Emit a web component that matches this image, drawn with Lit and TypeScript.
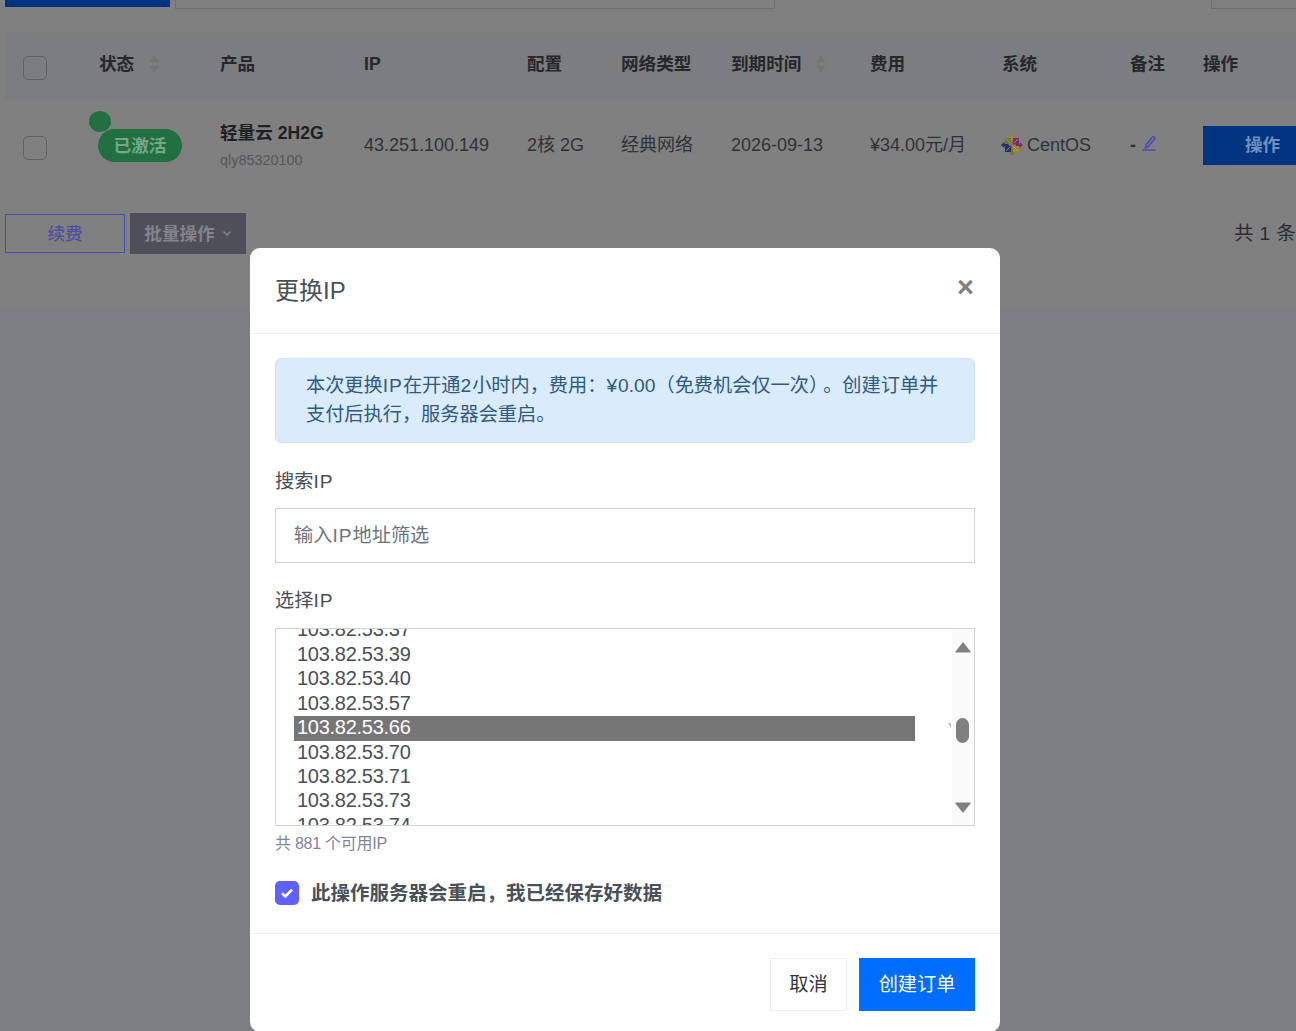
import { LitElement, html, css } from "lit";
import { customElement } from "lit/decorators.js";

const OPTIONS = [
  "103.82.53.37",
  "103.82.53.39",
  "103.82.53.40",
  "103.82.53.57",
  "103.82.53.66",
  "103.82.53.70",
  "103.82.53.71",
  "103.82.53.73",
  "103.82.53.74",
];

const sorter = html`<svg class="sort" width="10" height="17" viewBox="0 0 10 17">
  <path d="M5 0l5 6H0z" fill="#747474" />
  <path d="M0 10h10l-5 6z" fill="#747474" />
</svg>`;

const centos = html`<svg class="os" width="22" height="22" viewBox="0 0 22 22">
  <rect x="4" y="4" width="6.4" height="6.4" fill="#6d7a2e" />
  <rect x="11.6" y="4" width="6.4" height="6.4" fill="#7a2a6a" />
  <rect x="4" y="11.6" width="6.4" height="6.4" fill="#2c2c68" />
  <rect x="11.6" y="11.6" width="6.4" height="6.4" fill="#a8842a" />
  <path d="M5 5l4.4 4.4M17 5l-4.4 4.4M5 17l4.4-4.4M17 17l-4.4-4.4" stroke="#a0a0a0" stroke-width=".7" />
  <path d="M11 0l3 3.4h-2v4h-2v-4H8z" fill="#a8842a" />
  <path d="M22 11l-3.4 3v-2h-4v-2h4V8z" fill="#7a2a6a" />
  <path d="M11 22l-3-3.4h2v-4h2v4h2z" fill="#6d7a2e" />
  <path d="M0 11l3.4-3v2h4v2h-4v2z" fill="#2c2c68" />
</svg>`;

@customElement("app-root")
export class AppRoot extends LitElement {
  static styles = css`
    :host {
      display: block;
      position: relative;
      width: 1296px;
      height: 1031px;
      overflow: hidden;
      background: #7d7e81;
      font-family: "Liberation Sans", "Noto Sans CJK SC", sans-serif;
      line-height: 24px;
      text-spacing-trim: space-all;
      color: #2a2c30;
    }
    .page {
      height: 308px;
      background: #808080;
      padding-left: 5px;
      box-sizing: border-box;
      overflow: hidden;
    }
    .top {
      display: flex;
      height: 33px;
      width: 1400px;
      border-bottom: 1px solid #7b7b7b;
      box-sizing: border-box;
    }
    .top-blue {
      flex: none;
      width: 165px;
      height: 7px;
      background: #003380;
    }
    .top-field {
      flex: none;
      width: 600px;
      height: 9px;
      box-sizing: border-box;
      margin-left: 5px;
      border: 1px solid #6e6e6e;
      border-top: 0;
    }
    .top-right {
      flex: none;
      width: 100px;
      height: 9px;
      box-sizing: border-box;
      margin-left: 436px;
      border: 1px solid #6e6e6e;
      border-top: 0;
    }
    .row {
      display: grid;
      grid-template-columns: 76px 121px 144px 163px 94px 110px 139px 132px 128px 73px 120px;
      align-items: center;
      padding-left: 18px;
      width: 1320px;
      box-sizing: border-box;
      font-size: 18px;
    }
    .head {
      height: 67px;
      padding-bottom: 5px;
      background: #7c7d80;
      font-size: 17.6px;
      font-weight: 700;
      color: #25272b;
    }
    .cell {
      display: flex;
      align-items: center;
    }
    .sort {
      margin-left: 15px;
    }
    .check {
      width: 24px;
      height: 24px;
      box-sizing: border-box;
      border: 1px solid #5f6164;
      border-radius: 5px;
    }
    .head .check {
      margin-top: 8px;
    }
    .body .check {
      margin-top: 6px;
    }
    .body {
      height: 90px;
      color: #303236;
    }
    .status {
      position: relative;
      margin-top: 1px;
    }
    .badge {
      width: 84px;
      height: 33px;
      margin-left: -1px;
      border-radius: 17px;
      background: #226f42;
      color: #74a888;
      font-size: 17.6px;
      font-weight: 700;
      display: flex;
      align-items: center;
      justify-content: center;
    }
    .dot {
      position: absolute;
      left: -10px;
      top: -18px;
      width: 22px;
      height: 21px;
      border-radius: 50%;
      background: #226f42;
    }
    .product b {
      display: block;
      font-size: 17.6px;
      color: #1f2024;
      line-height: 24px;
    }
    .product small {
      display: block;
      margin-top: 6px;
      font-size: 14.4px;
      line-height: 18px;
      color: #54565c;
    }
    .os {
      margin-right: 4px;
      margin-left: -1px;
    }
    .remark b {
      font-weight: 700;
    }
    .remark svg {
      margin-left: 6px;
      margin-bottom: 4px;
    }
    .act {
      width: 120px;
      height: 39px;
      background: #003380;
      color: #7390bd;
      font-weight: 700;
      font-size: 17.6px;
      display: flex;
      align-items: center;
      padding-left: 42px;
      box-sizing: border-box;
    }
    .tools {
      display: flex;
      align-items: center;
      height: 41px;
      margin-top: 23px;
      width: 1291px;
      font-size: 17.6px;
    }
    .renew {
      width: 120px;
      height: 39px;
      box-sizing: border-box;
      border: 1px solid #4a4aa8;
      color: #50509f;
      display: flex;
      align-items: center;
      justify-content: center;
      font-weight: 500;
    }
    .batch {
      width: 116px;
      height: 41px;
      margin-left: 5px;
      background: #4f4f59;
      color: #83838c;
      font-weight: 700;
      display: flex;
      align-items: center;
      justify-content: center;
      gap: 7px;
    }
    .total {
      margin-left: auto;
      font-size: 19.2px;
      color: #2a2c30;
      letter-spacing: 0.4px;
      white-space: nowrap;
    }

    .overlay {
      position: absolute;
      inset: 0;
    }
    .modal {
      margin: 248px 0 0 250px;
      width: 750px;
      height: 784px;
      box-sizing: border-box;
      background: #fff;
      border-radius: 10px;
      color: #495057;
      font-size: 19.2px;
    }
    .m-head {
      height: 86px;
      box-sizing: border-box;
      border-bottom: 1px solid #eff0f4;
      padding: 25px 25px 0;
      display: flex;
      justify-content: space-between;
    }
    .m-title {
      font-size: 24px;
      line-height: 36px;
    }
    .close {
      color: #808080;
      font-size: 29px;
      line-height: 30px;
      font-weight: 700;
      margin-top: -1px;
      margin-right: 1px;
    }
    .m-body {
      padding: 24px 25px 0;
    }
    .alert {
      height: 85px;
      box-sizing: border-box;
      padding: 12px 30px;
      background: #daebfb;
      border: 1px solid #cfe3f8;
      border-radius: 6px;
      color: #2f5a82;
      line-height: 29px;
    }
    /* latin runs sit a little wider in the reference */
    .wide {
      letter-spacing: 1px;
    }
    .tight {
      letter-spacing: -5px;
    }
    .label {
      height: 28px;
      line-height: 28px;
    }
    .field-1 {
      margin-top: 25px;
    }
    .input {
      margin-top: 12px;
      height: 55px;
      box-sizing: border-box;
      border: 1px solid #ced4da;
      padding-left: 18px;
      display: flex;
      align-items: center;
      color: #6c757d;
    }
    .field-2 {
      margin-top: 24px;
    }
    .list {
      position: relative;
      margin-top: 13px;
      height: 198px;
      box-sizing: border-box;
      border: 1px solid #ced4da;
      display: flex;
      overflow: hidden;
    }
    .options {
      flex: 1;
      padding: 0 37px 0 18px;
      overflow: hidden;
    }
    .options-inner {
      margin-top: -10.6px;
    }
    .option {
      height: 24.43px;
      line-height: 22.6px;
      padding-left: 3px;
      font-size: 20px;
      letter-spacing: -0.27px;
    }
    .option.selected {
      background: #767676;
      color: #fff;
    }
    .speck {
      position: absolute;
      left: 672px;
      top: 94px;
    }
    .scroll {
      width: 22px;
      background: #fafafa;
      position: relative;
      display: flex;
      flex-direction: column;
      align-items: center;
      justify-content: space-between;
      padding: 13px 0 12px;
      box-sizing: border-box;
    }
    .thumb {
      position: absolute;
      left: 4px;
      top: 89px;
      width: 13px;
      height: 25px;
      border-radius: 6.5px;
      background: #808080;
    }
    .hint {
      margin-top: 7px;
      font-size: 16px;
      line-height: 22px;
      letter-spacing: -0.25px;
      color: #80859f;
    }
    .agree {
      margin-top: 25px;
      display: flex;
      align-items: center;
      gap: 12px;
      height: 26px;
      font-weight: 700;
      font-size: 19.5px;
    }
    .tick {
      width: 24px;
      height: 24px;
      border-radius: 5px;
      background: #5f61ff;
      display: flex;
      align-items: center;
      justify-content: center;
    }
    .m-foot {
      margin-top: 27px;
      border-top: 1px solid #eff0f4;
      padding: 24px 25px 0;
      display: flex;
      justify-content: flex-end;
      gap: 12px;
    }
    .btn {
      height: 53px;
      box-sizing: border-box;
      display: flex;
      align-items: center;
      justify-content: center;
    }
    .btn-cancel {
      width: 77px;
      border: 1px solid #eff0f6;
      color: #33363a;
    }
    .btn-ok {
      width: 116px;
      background: #006dff;
      color: #fff;
    }
  `;

  render() {
    return html`
      <div class="page">
        <div class="top">
          <div class="top-blue"></div>
          <div class="top-field"></div>
          <div class="top-right"></div>
        </div>
        <div class="row head">
          <div class="check"></div>
          <div class="cell">状态${sorter}</div>
          <div>产品</div>
          <div>IP</div>
          <div>配置</div>
          <div>网络类型</div>
          <div class="cell">到期时间${sorter}</div>
          <div>费用</div>
          <div>系统</div>
          <div>备注</div>
          <div>操作</div>
        </div>
        <div class="row body">
          <div class="check"></div>
          <div class="status">
            <span class="dot"></span>
            <div class="badge">已激活</div>
          </div>
          <div class="product"><b>轻量云 2H2G</b><small>qly85320100</small></div>
          <div>43.251.100.149</div>
          <div>2核 2G</div>
          <div>经典网络</div>
          <div>2026-09-13</div>
          <div>¥34.00元/月</div>
          <div class="cell">${centos}CentOS</div>
          <div class="cell remark">
            <b>-</b>
            <svg width="15" height="16" viewBox="0 0 15 16" fill="none" stroke="#4c4cb0" stroke-width="1.6">
              <path d="M4 10.2L3.4 12.6 5.8 12 12.4 4.2c.6-.8.5-1.6-.1-2.1-.7-.6-1.5-.5-2.1.2z" />
              <path d="M.5 15h13" />
            </svg>
          </div>
          <div class="act">操作</div>
        </div>
        <div class="tools">
          <div class="renew">续费</div>
          <div class="batch">
            批量操作
            <svg width="10" height="7" viewBox="0 0 10 7" fill="none" stroke="#83838c" stroke-width="1.6">
              <path d="M1.5 1.5L5 5l3.5-3.5" />
            </svg>
          </div>
          <div class="total">共 1 条</div>
        </div>
      </div>

      <div class="overlay">
        <div class="modal">
          <div class="m-head">
            <div class="m-title">更换IP</div>
            <div class="close">×</div>
          </div>
          <div class="m-body">
            <div class="alert">本次更换<span class="wide">IP</span>在开通<span class="wide">2</span>小时内，费用：<span class="wide">¥</span>0.00（免费机会仅一次<span class="tight">）</span>。创建订单并支付后执行，服务器会重启。</div>
            <div class="label field-1">搜索<span class="wide">IP</span></div>
            <div class="input"><span>输入<span class="wide">IP</span>地址筛选</span></div>
            <div class="label field-2">选择<span class="wide">IP</span></div>
            <div class="list">
              <div class="options">
                <div class="options-inner">
                  ${OPTIONS.map(
                    (ip) => html`<div class="option ${ip === "103.82.53.66" ? "selected" : ""}">${ip}</div>`
                  )}
                </div>
              </div>
              <svg class="speck" width="4" height="6" viewBox="0 0 4 6"><path d="M0 0h3v5z" fill="#b9c0cc" /></svg>
              <div class="scroll">
                <svg width="16" height="11" viewBox="0 0 16 11"><path d="M8 0l7.5 9.5q.4 1-.8 1H1.3q-1.2 0-.8-1z" fill="#808080" /></svg>
                <div class="thumb"></div>
                <svg width="16" height="11" viewBox="0 0 16 11"><path d="M8 11L.5 1.5q-.4-1 .8-1h13.4q1.2 0 .8 1z" fill="#808080" /></svg>
              </div>
            </div>
            <div class="hint">共 881 个可用IP</div>
            <div class="agree">
              <span class="tick">
                <svg width="14" height="12" viewBox="0 0 14 12" fill="none" stroke="#fff" stroke-width="2.6">
                  <path d="M2 6.2l3.4 3.2L12 2.6" />
                </svg>
              </span>
              此操作服务器会重启，我已经保存好数据
            </div>
          </div>
          <div class="m-foot">
            <div class="btn btn-cancel">取消</div>
            <div class="btn btn-ok">创建订单</div>
          </div>
        </div>
      </div>
    `;
  }
}
